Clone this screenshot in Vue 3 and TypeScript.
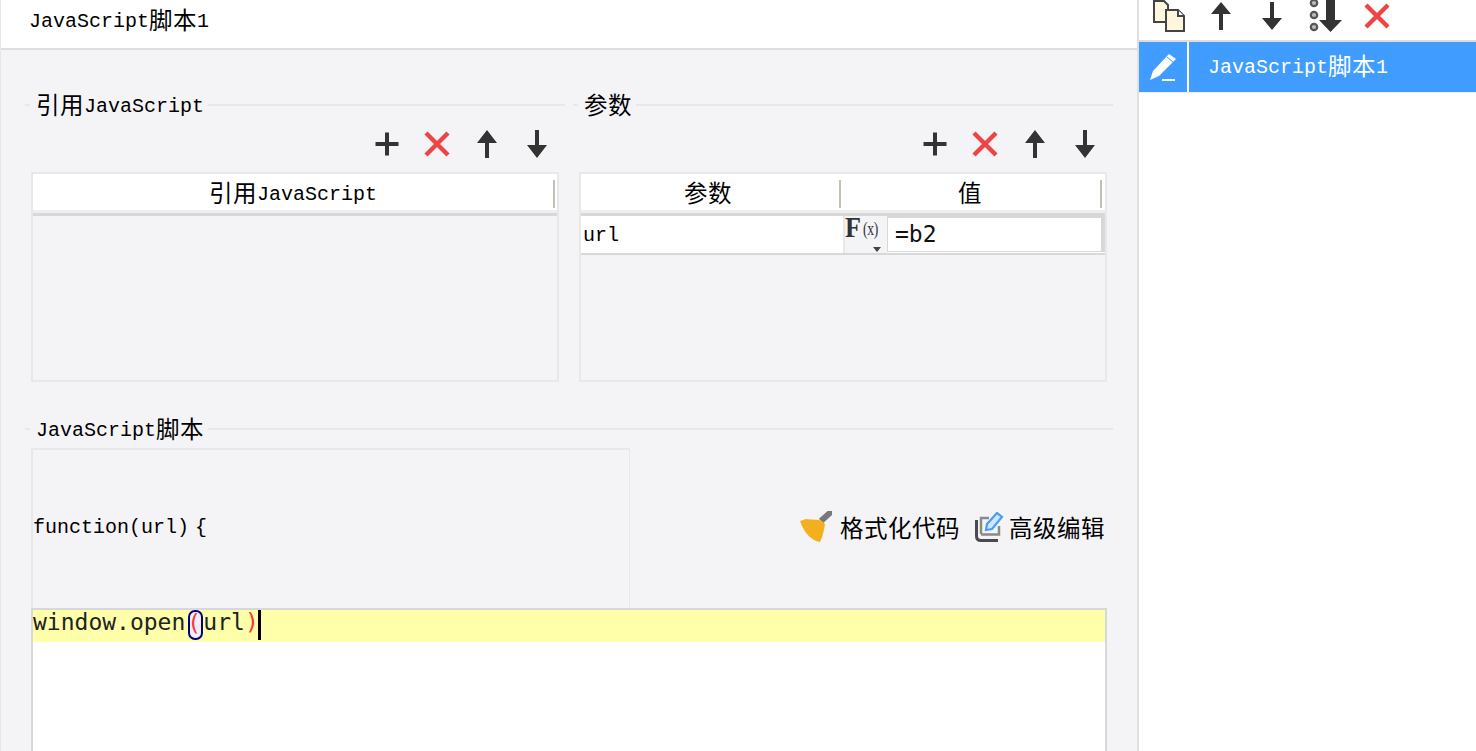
<script setup lang="ts">
const leftTools = ['plus', 'cross', 'up', 'down']
</script>

<template>
  <div class="root">
    <svg class="defs" width="0" height="0" aria-hidden="true">
      <defs>
        <symbol id="i-plus" viewBox="0 0 28 28"><path d="M14 2.500v23M2.500 14h23" fill="none" stroke="#333" stroke-width="4" /></symbol>
        <symbol id="i-cross" viewBox="0 0 28 28"><path d="M3 3l22 22M25 3L3 25" fill="none" stroke="#ef4444" stroke-width="4.5" /></symbol>
        <symbol id="i-up" viewBox="0 0 28 28"><path d="M14 0L24 13H16V28H12V13H4Z" fill="#333" /></symbol>
        <symbol id="i-down" viewBox="0 0 28 28"><path d="M14 28L24 15H16V0H12V15H4Z" fill="#333" /></symbol>
      </defs>
    </svg>

    <main class="main">
      <header class="head mono">JavaScript<span class="cn">脚本</span>1</header>
      <div class="body">
        <div class="columns">
          <section class="field">
            <div class="legend mono"><span class="lbl"><span class="cn">引用</span>JavaScript</span></div>
            <div class="tools">
              <svg v-for="t in leftTools" :key="t" class="tool"><use :href="`#i-${t}`" /></svg>
            </div>
            <div class="table">
              <div class="thead mono">
                <div class="th th-full"><span class="lbl"><span class="cn">引用</span>JavaScript</span></div>
              </div>
            </div>
          </section>
          <section class="field">
            <div class="legend mono"><span class="lbl"><span class="cn">参数</span></span></div>
            <div class="tools">
              <svg v-for="t in leftTools" :key="t" class="tool"><use :href="`#i-${t}`" /></svg>
            </div>
            <div class="table">
              <div class="thead mono">
                <div class="th th-name"><span class="lbl"><span class="cn">参数</span></span></div>
                <div class="th th-value"><span class="lbl"><span class="cn">值</span></span></div>
              </div>
              <div class="trow">
                <div class="cell-name mono">url</div>
                <div class="cell-fx">
                  <span class="fx-f">F</span><span class="fx-x">(x)</span>
                  <i class="fx-caret"></i>
                </div>
                <div class="cell-value">=b2</div>
              </div>
            </div>
          </section>
        </div>

        <section class="field script">
          <div class="legend mono"><span class="lbl">JavaScript<span class="cn">脚本</span></span></div>
          <div class="script-top">
            <div class="first-line mono">function(url) {</div>
            <div class="actions">
              <button class="action first">
                <svg width="32" height="32" viewBox="0 0 32 32">
                  <path d="M21 10L32 0" stroke="#77787c" stroke-width="6" fill="none" />
                  <path d="M0 10L6 8C12 9 18 8 22 10L25 13C24 19 23 25 20 31C12 30 4 22 0 10Z" fill="#f2b01e" />
                </svg>
                <span class="cn">格式化代码</span>
              </button>
              <button class="action">
                <svg width="29" height="30" viewBox="0 0 29 30">
                  <path d="M1.500 8V24Q1.500 28.500 6 28.500H23" fill="none" stroke="#4a4a4a" stroke-width="3" />
                  <path d="M6 22V6H14M24 14V22.500H6" fill="none" stroke="#8a8a8a" stroke-width="2.500" />
                  <path d="M11 18L12 12L22 1L27 5L17 17Z" fill="#cfe6ff" stroke="#4a9cf5" stroke-width="2.200" />
                </svg>
                <span class="cn">高级编辑</span>
              </button>
            </div>
          </div>
          <div class="editor">
            <div class="code-line">window.open<span class="bracket">(</span>url<span class="paren">)</span><i class="caret"></i></div>
          </div>
        </section>
      </div>
    </main>

    <aside class="side">
      <div class="side-tools">
        <svg class="s-copy" width="32" height="32" viewBox="0 0 32 32">
          <path d="M1 1H11L15 5V22H1Z" fill="#fff6de" stroke="#444" stroke-width="2" />
          <path d="M13 10H25L31 16V31H13Z" fill="#fff6de" stroke="#444" stroke-width="2" />
          <path d="M25 10V16H31" fill="#fff" stroke="#444" stroke-width="2" />
        </svg>
        <svg class="s-up" viewBox="0 0 20 28"><path d="M10 0L20 12H12V28H8V12H0Z" fill="#333" /></svg>
        <svg class="s-down" viewBox="0 0 20 28"><path d="M10 28L20 16H12V0H8V16H0Z" fill="#333" /></svg>
        <svg class="s-bottom" width="33" height="32" viewBox="0 0 33 32">
          <circle cx="5" cy="3" r="3.200" fill="#bbb" stroke="#555" stroke-width="2.200" />
          <circle cx="5" cy="15" r="3.200" fill="#bbb" stroke="#555" stroke-width="2.200" />
          <circle cx="5" cy="27" r="3.200" fill="#bbb" stroke="#555" stroke-width="2.200" />
          <path d="M21.500 32L33 20H26V0H17V20H10Z" fill="#333" />
        </svg>
        <svg class="s-cross" viewBox="0 0 28 28"><use href="#i-cross" /></svg>
      </div>
      <div class="side-row mono">
        <div class="side-icon">
          <svg width="30" height="30" viewBox="0 0 30 30">
            <path d="M1 28L4 19L20 2L27 7L10 24Z" fill="#fff" />
            <path d="M18 5L24 10" stroke="#409cff" stroke-width="1" />
            <path d="M13 28H26" stroke="#fff" stroke-width="2" />
          </svg>
        </div>
        <div class="side-text">JavaScript<span class="cn">脚本</span>1</div>
      </div>
    </aside>
  </div>
</template>

<style>
html, body { margin: 0; height: 100%; overflow: hidden; background: #fff; }
</style>

<style scoped>
.root { display: flex; width: 1476px; height: 751px; overflow: hidden; color: #000; background: #fff; }
.defs { position: absolute; }
.mono { font-family: "Liberation Mono", "Noto Sans CJK SC", monospace; font-size: 20px; }
.cn { font-family: "Noto Sans CJK SC", sans-serif; font-size: 23.500px; font-weight: 400; letter-spacing: 0.500px; vertical-align: -2px; line-height: 20px; }
.lbl { display: block; white-space: nowrap; }

.main { width: 1136px; flex: none; display: flex; flex-direction: column; border-left: 1px solid #e6e6e8; }
.head { height: 48px; line-height: 44px; padding-left: 28px; background: #fff; border-bottom: 2px solid #dedee0; }
.body { flex: 1; min-height: 0; background: #f4f4f7; padding: 43px 0 0 24px; display: flex; flex-direction: column; }

.columns { display: grid; grid-template-columns: 540px 540px; gap: 8px; }
.field { padding: 0 6px; min-width: 0; }

.legend { display: flex; align-items: center; height: 24px; line-height: 24px; margin: 0 -6px; }
.legend .lbl { position: relative; top: 1px; }
.legend::before { content: ""; width: 5px; height: 2px; background: #e8e8ea; margin-right: 6px; flex: none; }
.legend::after { content: ""; flex: 1; height: 2px; background: #e8e8ea; margin-left: 4px; }

.tools { display: flex; justify-content: flex-end; margin-right: -3px; padding: 13px 0 14px; }
.tool { width: 28px; height: 28px; margin: 0 11px; display: block; }

.table { height: 210px; box-sizing: border-box; border: 2px solid #e8e8ea; }
.thead { display: flex; height: 36px; background: #fff; border-bottom: 3px solid #eeeeee; box-shadow: 0 3px 0 #d8d8d8; }
.th { position: relative; display: flex; align-items: center; justify-content: center; height: 36px; padding-top: 4px; box-sizing: border-box; }
.th::after { content: ""; position: absolute; right: 0; top: 6px; height: 28px; width: 2px; background: #c4c0b6; }
.th-full { width: 100%; padding-right: 4px; }
.th-full::after { right: 2px; }
.th-name { width: 260px; padding-right: 6px; }
.th-value { flex: 1; padding-right: 6px; }
.th-value::after { right: 3px; }

.trow { display: flex; height: 37px; margin-top: 3px; background: #fff; border-bottom: 2px solid #d8d8d8; }
.cell-name { width: 262px; line-height: 39px; padding-left: 2px; box-sizing: border-box; }
.cell-fx { position: relative; width: 44px; background: #f4f4f7; border-left: 2px solid #e8e8ea; box-sizing: border-box; color: #333; }
.fx-f { position: absolute; left: 0; top: -3px; font: 700 29px/28px "Liberation Serif", serif; transform: scaleX(0.9); transform-origin: left center; }
.fx-x { position: absolute; left: 18px; top: 1px; font: 400 19px/24px "Liberation Serif", serif; letter-spacing: -0.500px; transform: scaleX(0.72); transform-origin: left center; }
.fx-caret { position: absolute; left: 28px; bottom: 1px; width: 0; height: 0; border: 4px solid transparent; border-top: 5px solid #444; border-bottom: 0; }
.cell-value { flex: 1; margin-top: -1px; border: 3px solid #d8d8d8; border-width: 3px 4px 1px 1px; background: #fff; font: 400 23px/32px "DejaVu Sans Mono", monospace; padding-left: 7px; color: #111; height: 37px; box-sizing: border-box; }

.script { margin-top: 35px; flex: 1; min-height: 0; width: 1076px; display: flex; flex-direction: column; }
.script-top { display: flex; height: 160px; margin-top: 7px; flex: none; }
.first-line { width: 599px; box-sizing: border-box; border: 2px solid #e8e8ea; border-bottom: 0; border-right-width: 1px; display: flex; align-items: center; height: 160px; padding-bottom: 4px; word-spacing: -6px; }
.actions { flex: 1; display: flex; align-items: center; justify-content: flex-end; margin-right: 2px; padding-bottom: 2px; }
.action { display: flex; align-items: center; gap: 5px; border: 0; padding: 0; margin: 0 0 0 15px; background: none; color: #000; }
.action.first { gap: 8px; }
.action .cn { line-height: 32px; vertical-align: 0; }

.editor { flex: 1; min-height: 0; width: 1076px; box-sizing: border-box; background: #fff; border: 2px solid #d8d8d8; border-bottom: 0; }
.code-line { height: 32px; background: #ffffaa; font: 400 23px/24px "DejaVu Sans Mono", monospace; color: #222; display: flex; align-items: flex-start; }
.bracket { width: 15px; height: 30px; margin-left: 3px; box-sizing: border-box; border: 2px solid #000080; border-radius: 7px; background: #eeeeff; color: #f33; line-height: 22px; text-indent: -3px; overflow: hidden; }
.paren { color: #f33; }
.caret { width: 3px; height: 30px; margin-left: -1px; background: #000; }

.side { flex: 1; min-width: 0; border-left: 2px solid #e0e0e2; background: #fff; }
.side-tools { height: 40px; border-bottom: 2px solid #dcdcde; display: flex; align-items: flex-start; }
.s-copy { margin: 0 0 0 14px; }
.s-up { width: 20px; height: 28px; margin: 2px 0 0 26px; }
.s-down { width: 20px; height: 28px; margin: 2px 0 0 31px; }
.s-bottom { margin: 0 0 0 27px; }
.s-cross { width: 28px; height: 28px; margin: 2px 0 0 21px; }
.side-row { display: flex; height: 50px; background: #409cff; color: #fff; border-bottom: 1px solid #eeeeee; }
.side-icon { width: 47px; flex: none; border-right: 2px solid #fff; display: flex; align-items: center; justify-content: center; padding-left: 1px; }
.side-text { padding-left: 19px; line-height: 52px; }
</style>
